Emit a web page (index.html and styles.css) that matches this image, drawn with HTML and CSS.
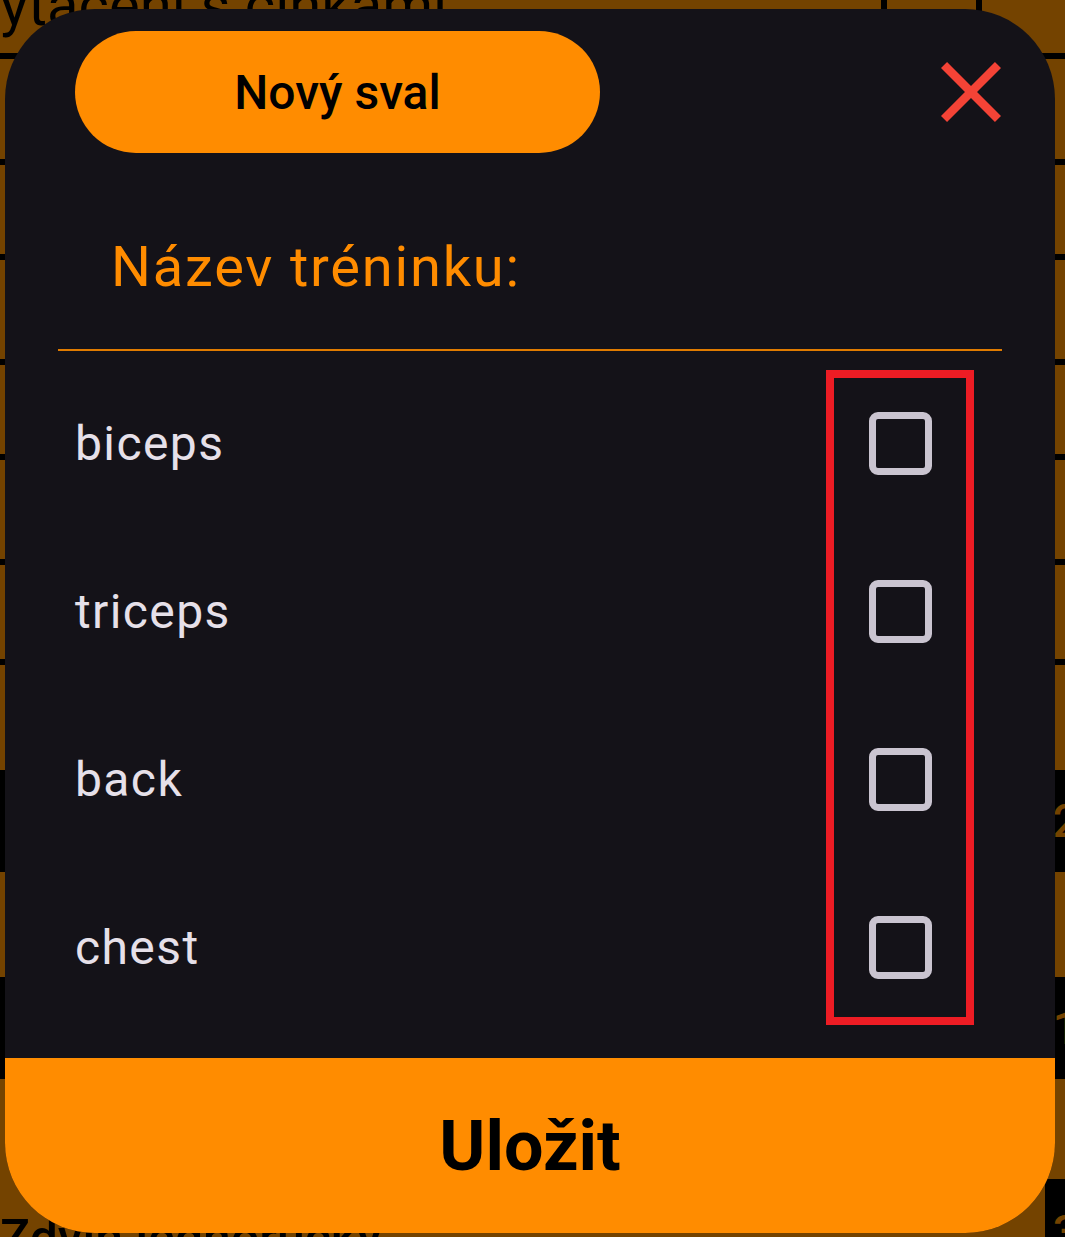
FILE: index.html
```html
<!DOCTYPE html>
<html lang="cs">
<head>
<meta charset="utf-8">
<title>Nový sval</title>
<link rel="stylesheet" href="styles.css">
</head>
<body>
<div class="backdrop">
  <div class="bg-row bg-row-top">
    <div class="bg-title">Vytáčení s činkami</div>
    <div class="bg-cell bg-cell-a"></div>
    <div class="bg-cell bg-cell-b"></div>
  </div>
  <div class="bg-row h106"></div>
  <div class="bg-row h95"></div>
  <div class="bg-row h105"></div>
  <div class="bg-row h95"></div>
  <div class="bg-row h105"></div>
  <div class="bg-row h100"></div>
  <div class="bg-row h105 plain"></div>
  <div class="bg-band h100"><span>2</span></div>
  <div class="bg-row h105 plain"></div>
  <div class="bg-band h100"><span>1</span></div>
  <div class="bg-row h100 plain"></div>
  <div class="bg-band bg-band-last"><span class="bg-z">Zdvih jednoručky</span><span>3</span></div>
</div>

<div class="dialog">
  <div class="header">
    <div class="pill">Nový sval</div>
    <svg class="close" viewBox="5 5 14 14" width="60" height="60" aria-label="Zavřít">
      <path d="M19 6.41L17.59 5 12 10.59 6.41 5 5 6.41 10.59 12 5 17.59 6.41 19 12 13.41 17.59 19 19 17.59 13.41 12z" fill="#F44336"/>
    </svg>
  </div>
  <div class="title">Název tréninku:</div>
  <div class="divider"></div>
  <div class="list">
    <div class="row"><span class="label">biceps</span><span class="check"></span></div>
    <div class="row"><span class="label">triceps</span><span class="check"></span></div>
    <div class="row"><span class="label">back</span><span class="check"></span></div>
    <div class="row"><span class="label">chest</span><span class="check"></span></div>
  </div>
  <div class="save">Uložit</div>
</div>

<div class="highlight"></div>
</body>
</html>
```

FILE: styles.css
```css
html, body {
  margin: 0;
  padding: 0;
}

body {
  width: 1065px;
  height: 1237px;
  overflow: hidden;
  position: relative;
  background: #744300;
  font-family: Roboto, "Noto Sans", "Liberation Sans", sans-serif;
}

/* ---------- dimmed page behind the dialog ---------- */
.backdrop {
  display: flex;
  flex-direction: column;
  width: 1065px;
  height: 1237px;
}

.bg-row {
  border-bottom: 6px solid #000;
  flex: none;
}

.bg-row.plain {
  border-bottom: none;
}

.bg-row-top {
  height: 53px;
  display: flex;
  position: relative;
}

.bg-title {
  font-size: 58px;
  line-height: 58px;
  margin-top: -24px;
  margin-left: -36px;
  color: #000;
  white-space: nowrap;
  width: 917px;
  flex: none;
}

.bg-cell {
  border-left: 6px solid #000;
  flex: none;
}

.bg-cell-a {
  width: 89px;
}

.bg-cell-b {
  flex: 1;
}

.h106 { height: 100px; }
.h95 { height: 89px; }
.h105 { height: 99px; }
.h100 { height: 94px; }

.bg-row.plain.h105 { height: 105px; }
.bg-row.plain.h100 { height: 100px; }

.bg-band {
  background: #000;
  flex: none;
  display: flex;
  justify-content: flex-end;
  align-items: center;
  color: #744300;
  font-size: 46px;
  font-weight: 500;
}

.bg-band.h100 { height: 102px; }

.bg-band span {
  margin-right: -14px;
}

.bg-band-last {
  flex: 1;
  justify-content: space-between;
  align-items: flex-start;
  background: linear-gradient(to right, #744300 0, #744300 1045px, #000 1045px);
}

.bg-band-last .bg-z {
  color: #000;
  font-size: 50px;
  margin: 30px 0 0 0;
}

.bg-band-last span:last-child {
  margin-top: 26px;
}

/* ---------- dialog ---------- */
.dialog {
  position: absolute;
  left: 5px;
  top: 9px;
  width: 1050px;
  height: 1224px;
  background: #141218;
  border-radius: 90px;
  overflow: hidden;
  display: flex;
  flex-direction: column;
}

.header {
  display: flex;
  align-items: center;
  justify-content: space-between;
  padding: 22px 54px 0 70px;
}

.pill {
  width: 525px;
  height: 122px;
  border-radius: 61px;
  background: #FF8C00;
  color: #000;
  font-size: 48px;
  font-weight: 500;
  display: flex;
  align-items: center;
  justify-content: center;
}

.close {
  display: block;
}

.title {
  margin: 81px 0 0 106px;
  font-size: 56px;
  line-height: 66px;
  letter-spacing: 1.8px;
  color: #FF8C00;
}

.divider {
  margin: 49px 53px 0;
  height: 2px;
  background: #E07B00;
}

.list {
  margin-top: 8px;
  display: flex;
  flex-direction: column;
}

.row {
  height: 168px;
  display: flex;
  align-items: center;
  justify-content: space-between;
  padding: 0 123px 0 70px;
}

.label {
  font-size: 48px;
  letter-spacing: 1.4px;
  color: #E6E0E9;
}

.check {
  width: 63px;
  height: 63px;
  box-sizing: border-box;
  border: 7px solid #CAC4D0;
  border-radius: 9px;
}

.save {
  margin-top: auto;
  height: 175px;
  background: #FF8C00;
  color: #000;
  font-size: 70px;
  font-weight: 700;
  display: flex;
  align-items: center;
  justify-content: center;
}

/* ---------- annotation overlay ---------- */
.highlight {
  position: absolute;
  left: 826px;
  top: 370px;
  width: 148px;
  height: 655px;
  box-sizing: border-box;
  border: 8px solid #ED1C24;
}
```
